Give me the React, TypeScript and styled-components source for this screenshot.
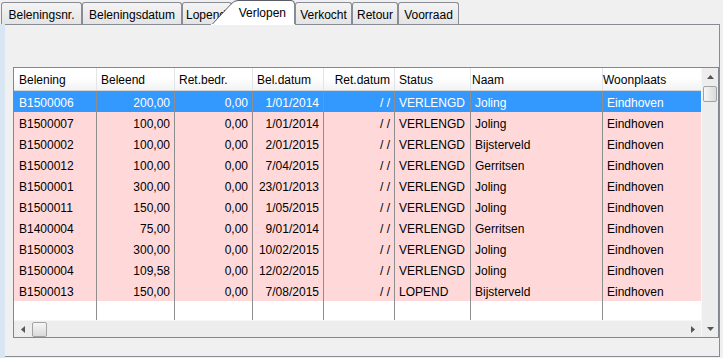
import styled, { createGlobalStyle } from 'styled-components'

type Col = {
  title: string
  width: number
  align: 'left' | 'right'
  headAlign: 'left' | 'right'
  headPad: number
  last?: boolean
}

const columns: Col[] = [
  { title: 'Belening', width: 83, align: 'left', headAlign: 'left', headPad: 5 },
  { title: 'Beleend', width: 78, align: 'right', headAlign: 'left', headPad: 4 },
  { title: 'Ret.bedr.', width: 78, align: 'right', headAlign: 'left', headPad: 4 },
  { title: 'Bel.datum', width: 71, align: 'right', headAlign: 'left', headPad: 4 },
  { title: 'Ret.datum', width: 71, align: 'right', headAlign: 'right', headPad: 4 },
  { title: 'Status', width: 76, align: 'left', headAlign: 'left', headPad: 4 },
  { title: 'Naam', width: 132, align: 'left', headAlign: 'left', headPad: 1 },
  { title: 'Woonplaats', width: 98, align: 'left', headAlign: 'left', headPad: 0, last: true },
]

const rows: string[][] = [
  ['B1500006', '200,00', '0,00', '1/01/2014', '/ /', 'VERLENGD', 'Joling', 'Eindhoven'],
  ['B1500007', '100,00', '0,00', '1/01/2014', '/ /', 'VERLENGD', 'Joling', 'Eindhoven'],
  ['B1500002', '100,00', '0,00', '2/01/2015', '/ /', 'VERLENGD', 'Bijsterveld', 'Eindhoven'],
  ['B1500012', '100,00', '0,00', '7/04/2015', '/ /', 'VERLENGD', 'Gerritsen', 'Eindhoven'],
  ['B1500001', '300,00', '0,00', '23/01/2013', '/ /', 'VERLENGD', 'Joling', 'Eindhoven'],
  ['B1500011', '150,00', '0,00', '1/05/2015', '/ /', 'VERLENGD', 'Joling', 'Eindhoven'],
  ['B1400004', '75,00', '0,00', '9/01/2014', '/ /', 'VERLENGD', 'Gerritsen', 'Eindhoven'],
  ['B1500003', '300,00', '0,00', '10/02/2015', '/ /', 'VERLENGD', 'Joling', 'Eindhoven'],
  ['B1500004', '109,58', '0,00', '12/02/2015', '/ /', 'VERLENGD', 'Joling', 'Eindhoven'],
  ['B1500013', '150,00', '0,00', '7/08/2015', '/ /', 'LOPEND', 'Bijsterveld', 'Eindhoven'],
]

const tabsBefore = [
  { label: 'Beleningsnr.', width: 81 },
  { label: 'Beleningsdatum', width: 100 },
  { label: 'Lopend', width: 50 },
]

const tabsAfter = [
  { label: 'Verkocht', width: 57 },
  { label: 'Retour', width: 46 },
  { label: 'Voorraad', width: 61 },
]

const GlobalStyle = createGlobalStyle`
  body {
    margin: 0;
    background: #f0f0f0;
  }
`

const Window = styled.div`
  width: 723px;
  height: 358px;
  display: flex;
  flex-direction: column;
  background: #f0f0f0;
  overflow: hidden;
  font-family: 'Liberation Sans', Arial, sans-serif;
  font-size: 12px;
  color: #000;
`

const TabStrip = styled.div`
  display: flex;
  align-items: flex-end;
  height: 24px;
  padding-left: 1px;
  position: relative;
  z-index: 2;
`

const Tab = styled.div<{ $w: number; $start?: boolean }>`
  box-sizing: border-box;
  width: ${(p) => p.$w}px;
  height: 22px;
  border: 1px solid #898c95;
  border-bottom: none;
  border-radius: 3px 3px 0 0;
  background: linear-gradient(#f4f4f4, #e4e4e4);
  display: flex;
  align-items: center;
  justify-content: ${(p) => (p.$start ? 'flex-start' : 'center')};
  padding: 3px 0 0 ${(p) => (p.$start ? 3 : 0)}px;
  white-space: nowrap;
  overflow: hidden;
`

const ActiveTab = styled.div`
  position: relative;
  box-sizing: border-box;
  width: 84px;
  height: 25px;
  margin-left: -21px;
  margin-bottom: -1px;
  z-index: 3;
  display: flex;
  justify-content: flex-end;
  padding: 6px 9px 0 0;
  line-height: 14px;
  white-space: nowrap;

  svg {
    position: absolute;
    left: 0;
    top: 0;
    z-index: -1;
  }
`

const Body = styled.div`
  flex: 1;
  display: flex;
  min-height: 0;
`

const LeftStrip = styled.div`
  width: 5px;
  background: #d8e5f3;
`

const Panel = styled.div`
  flex: 1;
  display: flex;
  flex-direction: column;
  border-top: 1px solid #898c95;
  border-right: 1px solid #898c95;
  border-bottom: 1px solid #898c95;
  margin: 0 3px 1px 0;
  padding: 42px 0 18px 8px;
`

const Grid = styled.div`
  flex: 1;
  display: grid;
  grid-template-columns: 1fr 17px;
  grid-template-rows: 1fr 17px;
  border: 1px solid #828790;
  background: #fff;
  min-height: 0;
`

const DataArea = styled.div`
  grid-column: 1;
  grid-row: 1;
  display: flex;
  flex-direction: column;
  overflow: hidden;
`

const HeaderRow = styled.div`
  display: flex;
  height: 23px;
  flex-shrink: 0;
  box-sizing: border-box;
  border-bottom: 1px solid #d5d5d5;
  background: linear-gradient(#ffffff 0%, #ffffff 45%, #f2f3f5 100%);
`

const HeaderCell = styled.div<{ $w: number; $align: string; $pad: number; $last?: boolean }>`
  box-sizing: border-box;
  width: ${(p) => p.$w}px;
  flex: ${(p) => (p.$last ? 1 : 'none')};
  border-right: ${(p) => (p.$last ? 'none' : '1px solid #e3e4e6')};
  display: flex;
  align-items: center;
  justify-content: ${(p) => (p.$align === 'right' ? 'flex-end' : 'flex-start')};
  padding: ${(p) => (p.$align === 'right' ? `2px ${p.$pad}px 0 0` : `2px 0 0 ${p.$pad}px`)};
  white-space: nowrap;
`

const Row = styled.div<{ $selected?: boolean }>`
  display: flex;
  height: 21px;
  flex-shrink: 0;
  background: ${(p) => (p.$selected ? '#3399ff' : '#ffd9d9')};
  color: ${(p) => (p.$selected ? '#fff' : '#000')};
`

const FillRow = styled.div`
  display: flex;
  flex: 1;
`

const Cell = styled.div<{ $w: number; $align?: string; $first?: boolean; $last?: boolean }>`
  box-sizing: border-box;
  width: ${(p) => p.$w}px;
  flex: ${(p) => (p.$last ? 1 : 'none')};
  border-right: ${(p) => (p.$last ? 'none' : '1px solid #8e8e8e')};
  display: flex;
  align-items: center;
  justify-content: ${(p) => (p.$align === 'right' ? 'flex-end' : 'flex-start')};
  padding: 2px 4px 0 ${(p) => (p.$first ? 5 : 4)}px;
  white-space: nowrap;
`

const HScroll = styled.div`
  grid-column: 1;
  grid-row: 2;
  display: flex;
  align-items: center;
  background: #ededed;
  border-top: 1px solid #f7f7f7;
`

const VScroll = styled.div`
  grid-column: 2;
  grid-row: 1 / span 2;
  display: flex;
  flex-direction: column;
  background: #ededed;
  border-left: 1px solid #f7f7f7;
`

const ArrowBox = styled.div`
  width: 17px;
  height: 17px;
  flex-shrink: 0;
  display: flex;
  align-items: center;
  justify-content: center;
`

const Spacer = styled.div`
  flex: 1;
`

const Thumb = styled.div<{ $vertical?: boolean }>`
  box-sizing: border-box;
  width: ${(p) => (p.$vertical ? 14 : 15)}px;
  height: ${(p) => (p.$vertical ? 16 : 15)}px;
  margin: ${(p) => (p.$vertical ? '1px 0 0 1px' : '0 0 0 1px')};
  border: 1px solid #a2a2a2;
  border-radius: 2px;
  background: linear-gradient(${(p) => (p.$vertical ? '90deg, ' : '')}#f6f6f6, #dadada);
`

const Arrow = ({ dir }: { dir: 'up' | 'down' | 'left' | 'right' }) => {
  const pts = {
    up: '0,4 7,4 3.5,0',
    down: '0,0 7,0 3.5,4',
    left: '4,0 4,7 0,3.5',
    right: '0,0 0,7 4,3.5',
  }[dir]
  const horiz = dir === 'left' || dir === 'right'
  return (
    <svg width={horiz ? 4 : 7} height={horiz ? 7 : 4} viewBox={horiz ? '0 0 4 7' : '0 0 7 4'}>
      <polygon points={pts} fill="#555" />
    </svg>
  )
}

export default function App() {
  return (
    <Window>
      <GlobalStyle />
      <TabStrip>
        {tabsBefore.map((t) => (
          <Tab key={t.label} $w={t.width} $start={t.label === 'Lopend'}>
            {t.label}
          </Tab>
        ))}
        <ActiveTab>
          <svg width="84" height="25" viewBox="0 0 84 25">
            <path
              d="M0.5 25 L20 4.2 Q23 0.5 27 0.5 L80 0.5 Q83.5 0.5 83.5 4 L83.5 25 Z"
              fill="#fff"
              stroke="#5a5d66"
              strokeWidth="1"
            />
            <rect x="0" y="24" width="84" height="1" fill="#fff" />
            <rect x="83" y="4" width="1" height="20" fill="#898c95" />
          </svg>
          Verlopen
        </ActiveTab>
        {tabsAfter.map((t) => (
          <Tab key={t.label} $w={t.width}>
            {t.label}
          </Tab>
        ))}
      </TabStrip>
      <Body>
        <LeftStrip />
        <Panel>
          <Grid>
            <DataArea>
              <HeaderRow>
                {columns.map((c) => (
                  <HeaderCell
                    key={c.title}
                    $w={c.width}
                    $align={c.headAlign}
                    $pad={c.headPad}
                    $last={c.last}
                  >
                    {c.title}
                  </HeaderCell>
                ))}
              </HeaderRow>
              {rows.map((r, i) => (
                <Row key={r[0]} $selected={i === 0}>
                  {r.map((v, j) => (
                    <Cell
                      key={j}
                      $w={columns[j].width}
                      $align={columns[j].align}
                      $first={j === 0}
                      $last={columns[j].last}
                    >
                      {v}
                    </Cell>
                  ))}
                </Row>
              ))}
              <FillRow>
                {columns.map((c) => (
                  <Cell key={c.title} $w={c.width} $last={c.last} />
                ))}
              </FillRow>
            </DataArea>
            <HScroll>
              <ArrowBox>
                <Arrow dir="left" />
              </ArrowBox>
              <Thumb />
              <Spacer />
              <ArrowBox>
                <Arrow dir="right" />
              </ArrowBox>
            </HScroll>
            <VScroll>
              <ArrowBox>
                <Arrow dir="up" />
              </ArrowBox>
              <Thumb $vertical />
              <Spacer />
              <ArrowBox>
                <Arrow dir="down" />
              </ArrowBox>
            </VScroll>
          </Grid>
        </Panel>
      </Body>
    </Window>
  )
}
